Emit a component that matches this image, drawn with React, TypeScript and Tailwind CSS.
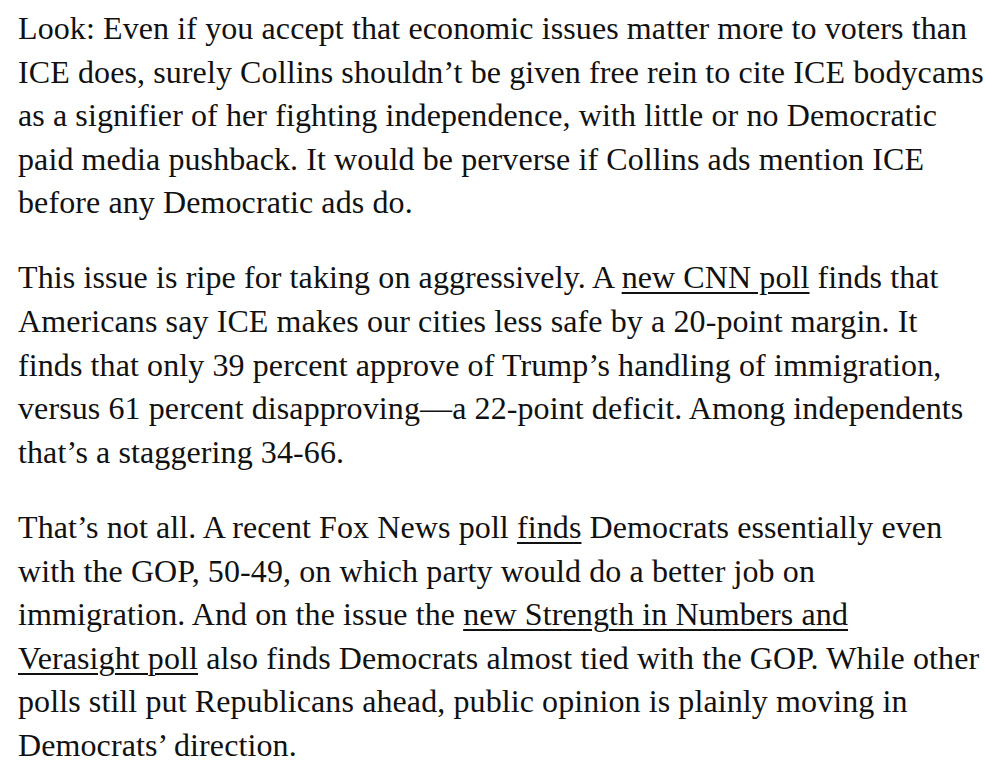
const para1 = [
  "Look: Even if you accept that economic issues matter more to voters than",
  "ICE does, surely Collins shouldn\u2019t be given free rein to cite ICE bodycams",
  "as a signifier of her fighting independence, with little or no Democratic",
  "paid media pushback. It would be perverse if Collins ads mention ICE",
  "before any Democratic ads do.",
];

function Link({ children }: { children: React.ReactNode }) {
  return (
    <a
      href="#"
      className="underline decoration-[2px] underline-offset-[4px] text-[#111]"
    >
      {children}
    </a>
  );
}

function Line({ children }: { children: React.ReactNode }) {
  return <span className="block whitespace-nowrap">{children}</span>;
}

export default function App() {
  return (
    <div
      className="min-h-screen w-full bg-white px-[18px] pt-[7px] text-[32px] leading-[43.6px] tracking-[0.1px] text-[#111]"
      style={{ fontFamily: '"Liberation Serif", serif' }}
    >
      <p className="mb-[31.5px]">
        {para1.map((l) => (
          <Line key={l}>{l}</Line>
        ))}
      </p>
      <p className="mb-[31.5px]">
        <Line>
          This issue is ripe for taking on aggressively. A{" "}
          <Link>new CNN poll</Link> finds that
        </Line>
        <Line>
          Americans say ICE makes our cities less safe by a 20-point margin. It
        </Line>
        <Line>
          finds that only 39 percent approve of Trump{"\u2019"}s handling of
          immigration,
        </Line>
        <Line>
          versus 61 percent disapproving{"\u2014"}a 22-point deficit. Among
          independents
        </Line>
        <Line>that{"\u2019"}s a staggering 34-66.</Line>
      </p>
      <p>
        <Line>
          That{"\u2019"}s not all. A recent Fox News poll <Link>finds</Link>{" "}
          Democrats essentially even
        </Line>
        <Line>
          with the GOP, 50-49, on which party would do a better job on
        </Line>
        <Line>
          immigration. And on the issue the{" "}
          <Link>new Strength in Numbers and</Link>
        </Line>
        <Line>
          <Link>Verasight poll</Link> also finds Democrats almost tied with
          the GOP. While other
        </Line>
        <Line>
          polls still put Republicans ahead, public opinion is plainly moving
          in
        </Line>
        <Line>Democrats{"\u2019"} direction.</Line>
      </p>
    </div>
  );
}
